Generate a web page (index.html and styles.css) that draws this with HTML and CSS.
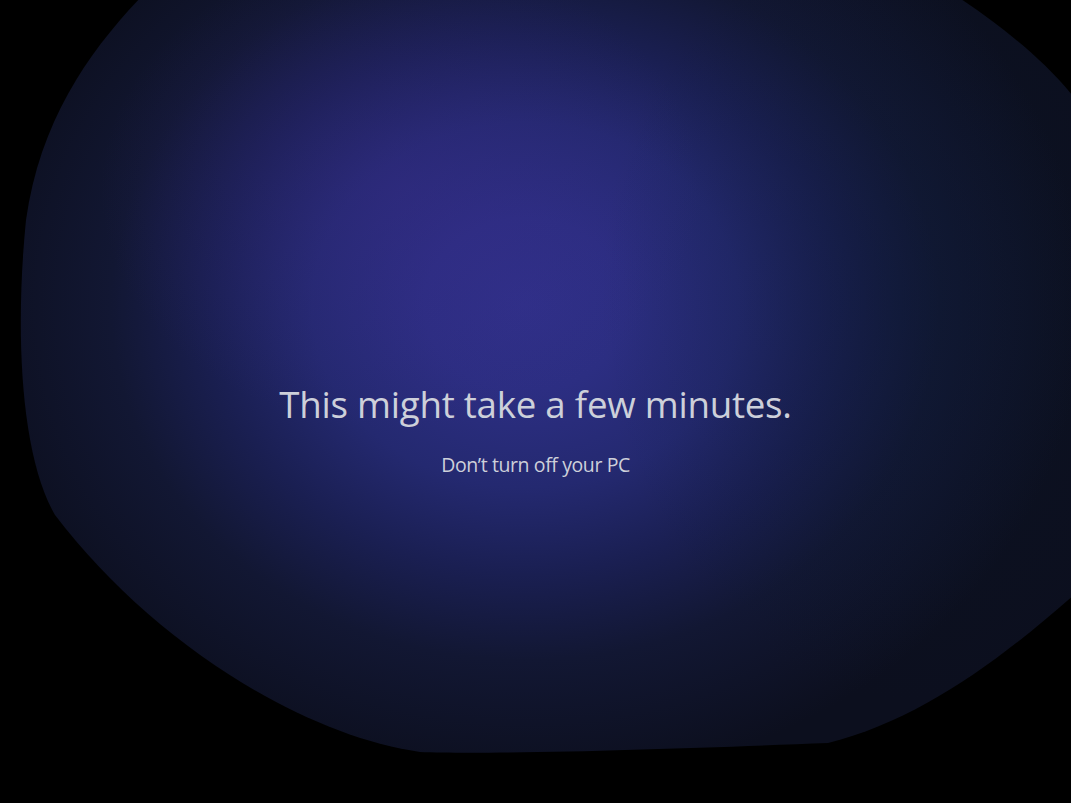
FILE: index.html
```html
<!DOCTYPE html>
<html lang="en">
<head>
<meta charset="utf-8">
<title>Updates</title>
<link rel="stylesheet" href="styles.css">
</head>
<body>
<div class="screen">
  <svg class="glow" width="1071" height="803" viewBox="0 0 1071 803" aria-hidden="true">
    <defs>
      <radialGradient id="g1" gradientUnits="userSpaceOnUse" cx="0" cy="0" r="1" gradientTransform="translate(525 305) scale(560 480)">
        <stop offset="0" stop-color="#2f3088"/>
        <stop offset="0.18" stop-color="#2c2e82"/>
        <stop offset="0.38" stop-color="#242970"/>
        <stop offset="0.56" stop-color="#1a1f52"/>
        <stop offset="0.74" stop-color="#121733"/>
        <stop offset="1" stop-color="#0c0f1e"/>
      </radialGradient>
      <radialGradient id="g2" gradientUnits="userSpaceOnUse" cx="0" cy="0" r="1" gradientTransform="translate(400 190) scale(300 240)">
        <stop offset="0" stop-color="#3a2a8a" stop-opacity="0.35"/>
        <stop offset="1" stop-color="#3a2a8a" stop-opacity="0"/>
      </radialGradient>
      <radialGradient id="g3" gradientUnits="userSpaceOnUse" cx="0" cy="0" r="1" gradientTransform="translate(900 300) scale(300 400)">
        <stop offset="0" stop-color="#0a1a30" stop-opacity="0.35"/>
        <stop offset="1" stop-color="#0a1a30" stop-opacity="0"/>
      </radialGradient>
    </defs>
    <path d="M143 -5 L955 -5 C1000 25 1045 60 1076 100 L1076 593 C1000 660 920 720 828 743 C700 748 500 755 420 752 C300 735 150 640 55 515 C20 455 15 330 26 220 C40 120 90 50 143 -5 Z" fill="url(#g1)"/>
    <path d="M143 -5 L955 -5 C1000 25 1045 60 1076 100 L1076 593 C1000 660 920 720 828 743 C700 748 500 755 420 752 C300 735 150 640 55 515 C20 455 15 330 26 220 C40 120 90 50 143 -5 Z" fill="url(#g2)"/>
    <path d="M143 -5 L955 -5 C1000 25 1045 60 1076 100 L1076 593 C1000 660 920 720 828 743 C700 748 500 755 420 752 C300 735 150 640 55 515 C20 455 15 330 26 220 C40 120 90 50 143 -5 Z" fill="url(#g3)"/>
  </svg>
  <main class="message">
    <h1 class="title">This might take a few minutes.</h1>
    <p class="subtitle">Don’t turn off your PC</p>
  </main>
</div>
</body>
</html>
```

FILE: styles.css
```css
html, body {
  margin: 0;
  padding: 0;
  background: #000;
  width: 100%;
  height: 100%;
  overflow: hidden;
}

.screen {
  position: relative;
  width: 1071px;
  height: 803px;
  background: #000;
}

.glow {
  position: absolute;
  left: 0;
  top: 0;
  display: block;
}

.message {
  position: relative;
  display: flex;
  flex-direction: column;
  align-items: center;
  padding-top: 379px;
  font-family: "Open Sans", "Noto Sans", sans-serif;
  color: #cdd0da;
}

.title {
  margin: 0;
  font-size: 36.7px;
  font-weight: 400;
  line-height: 50px;
  letter-spacing: -0.25px;
}

.subtitle {
  margin: 23px 0 0;
  font-size: 19.5px;
  font-weight: 400;
  line-height: 26px;
  letter-spacing: -0.4px;
}
```
